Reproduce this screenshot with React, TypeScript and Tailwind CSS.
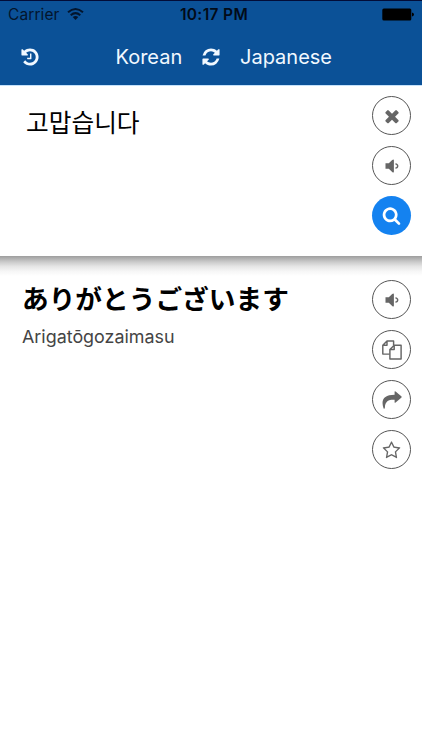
import type { ReactNode } from 'react';

function Glyph({ d, size, className = '' }: { d: string; size: number; className?: string }) {
  return (
    <svg width={size} height={size} viewBox="0 0 1792 1792" fill="currentColor" className={className}>
      <path d={d} />
    </svg>
  );
}

const HISTORY =
  'M1664 896q0 156-61 298t-164 245-245 164-298 61q-172 0-327-72.5t-264-204.5q-7-10-6.5-22.5t8.5-20.5l137-138q10-9 25-9 16 2 23 12 73 95 179 147t225 52q104 0 198.5-40.5t163.5-109.5 109.5-163.5 40.5-198.5-40.5-198.5-109.5-163.5-163.5-109.5-198.5-40.5q-98 0-188 35.5t-160 101.5l137 138q31 30 14 69-17 40-59 40h-448q-26 0-45-19t-19-45v-448q0-42 40-59 39-17 69 14l130 129q107-101 244.5-156.5t284.5-55.5q156 0 298 61t245 164 164 245 61 298zm-640-288v448q0 14-9 23t-23 9h-320q-14 0-23-9t-9-23v-64q0-14 9-23t23-9h224v-352q0-14 9-23t23-9h64q14 0 23 9t9 23z';
const REFRESH =
  'M1639 1056q0 5-1 7-64 268-268 434.5t-478 166.5q-146 0-282.5-55t-243.5-157l-129 129q-19 19-45 19t-45-19-19-45v-448q0-26 19-45t45-19h448q26 0 45 19t19 45-19 45l-137 137q71 66 161 102t187 36q134 0 250-65t186-179q11-17 53-117 8-23 30-23h192q13 0 22.5 9.5t9.5 22.5zm25-800v448q0 26-19 45t-45 19h-448q-26 0-45-19t-19-45 19-45l138-138q-148-137-349-137-134 0-250 65t-186 179q-11 17-53 117-8 23-30 23h-199q-13 0-22.5-9.5t-9.5-22.5v-7q65-268 270-434.5t480-166.5q146 0 284 55.5t245 156.5l130-129q19-19 45-19t45 19 19 45z';
const SEARCH =
  'M1216 832q0-185-131.5-316.5t-316.5-131.5-316.5 131.5-131.5 316.5 131.5 316.5 316.5 131.5 316.5-131.5 131.5-316.5zm512 832q0 52-38 90t-90 38q-54 0-90-38l-343-342q-179 124-399 124-143 0-273.5-55.5t-225-150-150-225-55.5-273.5 55.5-273.5 150-225 225-150 273.5-55.5 273.5 55.5 225 150 150 225 55.5 273.5q0 220-124 399l343 343q37 37 37 90z';
const TIMES =
  'M1490 1322q0 40-28 68l-136 136q-28 28-68 28t-68-28l-294-294-294 294q-28 28-68 28t-68-28l-136-136q-28-28-28-68t28-68l294-294-294-294q-28-28-28-68t28-68l136-136q28-28 68-28t68 28l294 294 294-294q28-28 68-28t68 28l136 136q28 28 28 68t-28 68l-294 294 294 294q28 28 28 68z';
const STAR =
  'M1201 1004l306-297-422-62-189-382-189 382-422 62 306 297-73 421 378-199 377 199zm527-357q0 22-26 48l-363 354 86 500q1 7 1 20 0 50-41 50-19 0-40-12l-449-236-449 236q-22 12-40 12-21 0-31.5-14.5t-10.5-35.5q0-6 2-20l86-500-364-354q-25-27-25-48 0-37 56-46l502-73 225-455q19-41 49-41t49 41l225 455 502 73q56 9 56 46z';

function Speaker() {
  return (
    <svg width="14" height="14" viewBox="0 0 14 14" fill="currentColor">
      <path d="M.5 4.2H3.8L7.2 1Q8.9-.3 8.9 1.4V12.6Q8.9 14.3 7.2 13L3.8 9.8H.5Z" />
      <path d="M10.4 4.9Q12.7 5.2 12.7 7T10.4 9.1" fill="none" stroke="currentColor" strokeWidth="1.4" />
    </svg>
  );
}

function Files() {
  return (
    <svg width="20" height="20" viewBox="0 0 20 20" fill="none" stroke="currentColor" strokeWidth="1.45" strokeLinejoin="round">
      <path d="M7.7 14.1H.8V5.3L5 1H11.6V5.2M5 1V5.3H.8" />
      <path d="M7.9 9.5L12.2 5.2H19.1V19H7.9ZM12.2 5.2V9.5H7.9" />
    </svg>
  );
}

function Forward() {
  return (
    <svg width="20" height="18" viewBox="0 0 20 18" fill="currentColor">
      <path d="M12.6.8Q12.6-.3 13.6.5L19.3 5.3Q20 6 19.3 6.7L13.6 11.6Q12.6 12.3 12.6 11.2V8.8C7.5 8.5 3 9.6 2.9 16.8Q2.7 18 1.6 17.6C-1.4 9 1.8 3.8 12.6 3.8Z" />
    </svg>
  );
}

function RoundButton({ label, filled = false, children }: { label: string; filled?: boolean; children: ReactNode }) {
  return (
    <button
      aria-label={label}
      className={
        filled
          ? 'flex size-[39px] items-center justify-center rounded-full bg-[#1482f0] text-white'
          : 'flex size-[39px] items-center justify-center rounded-full border border-[#555] bg-white text-[#666]'
      }
    >
      {children}
    </button>
  );
}

export default function App() {
  return (
    <div className="flex h-[750px] w-[422px] flex-col overflow-hidden bg-white font-['Inter','Noto_Sans_CJK_JP',sans-serif]">
      <header className="h-[85px] shrink-0 border-t border-[#020c38] bg-[#0b5197]">
        <div className="grid h-7 grid-cols-3 items-center pr-2 pl-2 text-[#03152d]">
          <div className="flex items-center gap-[7px]">
            <span className="text-[15.5px] tracking-[0.1px]">Carrier</span>
            <svg width="17" height="12" viewBox="0 0 17 12" className="-mt-[2px]" fill="none" stroke="currentColor" strokeWidth="2">
              <path d="M1 4.3Q8.5-2.2 16 4.3M3.7 7.3Q8.5 3 13.3 7.3" />
              <path d="M5.7 9.1Q8.5 6.9 11.3 9.1L8.5 12Z" fill="currentColor" stroke="none" />
            </svg>
          </div>
          <span className="pl-[6px] text-center text-[15.5px] font-semibold tracking-[0.35px] whitespace-nowrap text-[#020b18]">10:17 PM</span>
          <svg width="32" height="13" viewBox="0 0 32 13" className="-mt-[2px] justify-self-end" fill="#000">
            <rect x=".3" y=".5" width="29" height="12" rx="1.5" />
            <path d="M30 4.5Q32 4.8 32 6.5T30 8.5Z" />
          </svg>
        </div>
        <div className="flex h-[55px] items-center text-[20px] text-[#f1f8ff]">
          <Glyph d={HISTORY} size={20} className="ml-[19.5px]" />
          <span className="ml-[76px] w-[67px] whitespace-nowrap">Korean</span>
          <Glyph d={REFRESH} size={20} className="ml-[18.5px]" />
          <span className="ml-[19px] whitespace-nowrap">Japanese</span>
        </div>
      </header>

      <section className="flex h-[171px] shrink-0 justify-between border-t border-[#c5e2fb] bg-white pr-[11px]">
        <p className="pt-[17px] pl-[26px] font-['Noto_Sans_CJK_KR',sans-serif] text-[24.7px] leading-[36px] text-black">고맙습니다</p>
        <div className="flex flex-col gap-[11px] pt-[10px]">
          <RoundButton label="Clear"><Glyph d={TIMES} size={20} className="mt-px" /></RoundButton>
          <RoundButton label="Listen"><Speaker /></RoundButton>
          <RoundButton label="Search" filled><Glyph d={SEARCH} size={19} /></RoundButton>
        </div>
      </section>

      <div className="h-5 shrink-0 bg-[linear-gradient(to_bottom,#9d9d9d_0%,#b0b0b0_12%,#cbcbcb_30%,#e5e5e5_52%,#f6f6f6_76%,#ffffff_100%)]" />

      <main className="flex flex-1 justify-between pr-[11px] pl-[22px]">
        <div className="pt-[2px]">
          <p className="font-['Noto_Sans_CJK_JP',sans-serif] text-[26.7px] leading-[40px] font-bold text-black">ありがとうございます</p>
          <p className="text-[17.9px] leading-[38px] text-[#444]">Arigatōgozaimasu</p>
        </div>
        <div className="flex flex-col gap-[11px] pt-[4px]">
          <RoundButton label="Listen to translation"><Speaker /></RoundButton>
          <RoundButton label="Copy"><Files /></RoundButton>
          <RoundButton label="Share"><Forward /></RoundButton>
          <RoundButton label="Favorite"><Glyph d={STAR} size={19} className="mt-px" /></RoundButton>
        </div>
      </main>
    </div>
  );
}
